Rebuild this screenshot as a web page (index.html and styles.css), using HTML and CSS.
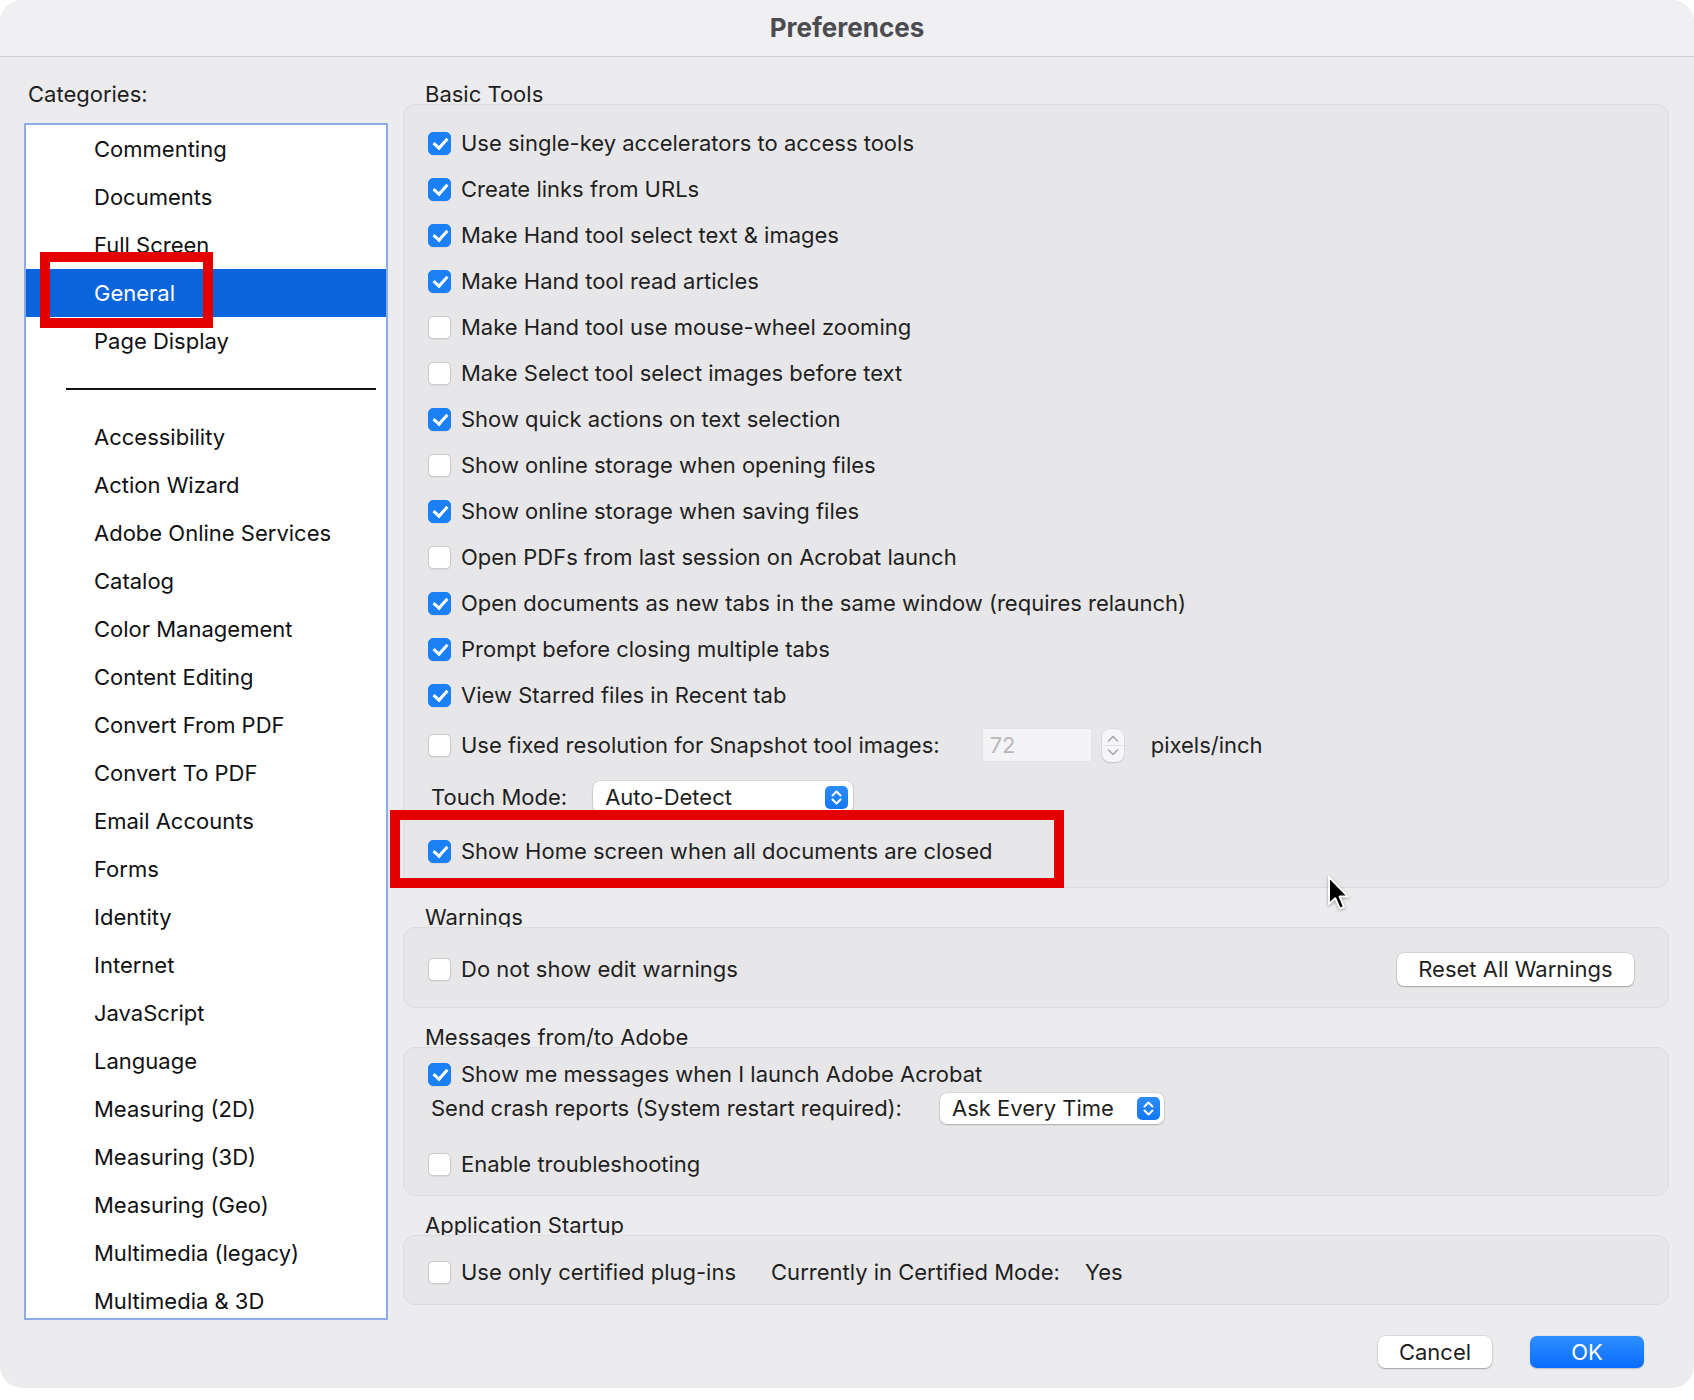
FILE: index.html
```html
<!DOCTYPE html>
<html>
<head>
<meta charset="utf-8">
<title>Preferences</title>
<link rel="stylesheet" href="styles.css">
</head>
<body>
<div class="window">
  <div class="titlebar">Preferences</div>
  <div class="main">
    <div class="left">
      <div class="label cat-label">Categories:</div>
      <div class="catlist">
        <div class="cat">Commenting</div>
        <div class="cat">Documents</div>
        <div class="cat">Full Screen</div>
        <div class="cat sel">General</div>
        <div class="cat">Page Display</div>
        <div class="sep"></div>
        <div class="cat">Accessibility</div>
        <div class="cat">Action Wizard</div>
        <div class="cat">Adobe Online Services</div>
        <div class="cat">Catalog</div>
        <div class="cat">Color Management</div>
        <div class="cat">Content Editing</div>
        <div class="cat">Convert From PDF</div>
        <div class="cat">Convert To PDF</div>
        <div class="cat">Email Accounts</div>
        <div class="cat">Forms</div>
        <div class="cat">Identity</div>
        <div class="cat">Internet</div>
        <div class="cat">JavaScript</div>
        <div class="cat">Language</div>
        <div class="cat">Measuring (2D)</div>
        <div class="cat">Measuring (3D)</div>
        <div class="cat">Measuring (Geo)</div>
        <div class="cat">Multimedia (legacy)</div>
        <div class="cat">Multimedia &amp; 3D</div>
        <div class="annot annot-general"></div>
      </div>
    </div>

    <div class="right">
      <div class="section-label">Basic Tools</div>
      <div class="group g-basic">
        <div class="row"><span class="cb on"></span><span>Use single-key accelerators to access tools</span></div>
        <div class="row"><span class="cb on"></span><span>Create links from URLs</span></div>
        <div class="row"><span class="cb on"></span><span>Make Hand tool select text &amp; images</span></div>
        <div class="row"><span class="cb on"></span><span>Make Hand tool read articles</span></div>
        <div class="row"><span class="cb"></span><span>Make Hand tool use mouse-wheel zooming</span></div>
        <div class="row"><span class="cb"></span><span>Make Select tool select images before text</span></div>
        <div class="row"><span class="cb on"></span><span>Show quick actions on text selection</span></div>
        <div class="row"><span class="cb"></span><span>Show online storage when opening files</span></div>
        <div class="row"><span class="cb on"></span><span>Show online storage when saving files</span></div>
        <div class="row"><span class="cb"></span><span>Open PDFs from last session on Acrobat launch</span></div>
        <div class="row"><span class="cb on"></span><span>Open documents as new tabs in the same window (requires relaunch)</span></div>
        <div class="row"><span class="cb on"></span><span>Prompt before closing multiple tabs</span></div>
        <div class="row"><span class="cb on"></span><span>View Starred files in Recent tab</span></div>
        <div class="row r-fixed">
          <span class="cb"></span><span>Use fixed resolution for Snapshot tool images:</span>
          <span class="numfield">72</span>
          <span class="spin">
            <svg viewBox="0 0 22 33" width="22" height="33"><path d="M6.5 12 L11 7.5 L15.5 12" fill="none" stroke="#a9a9ad" stroke-width="1.6" stroke-linecap="round" stroke-linejoin="round"/><line x1="1" y1="16.5" x2="21" y2="16.5" stroke="#e2e2e4" stroke-width="1"/><path d="M6.5 21 L11 25.5 L15.5 21" fill="none" stroke="#a9a9ad" stroke-width="1.6" stroke-linecap="round" stroke-linejoin="round"/></svg>
          </span>
          <span class="unit">pixels/inch</span>
        </div>
        <div class="row r-touch">
          <span class="plain-label">Touch Mode:</span>
          <span class="select sel-touch"><span>Auto-Detect</span>
            <span class="stepper"><svg viewBox="0 0 23 23" width="23" height="23"><path d="M7.5 9.5 L11.5 5.5 L15.5 9.5" fill="none" stroke="#fff" stroke-width="2" stroke-linecap="round" stroke-linejoin="round"/><path d="M7.5 13.5 L11.5 17.5 L15.5 13.5" fill="none" stroke="#fff" stroke-width="2" stroke-linecap="round" stroke-linejoin="round"/></svg></span>
          </span>
        </div>
        <div class="row r-home"><span class="cb on"></span><span>Show Home screen when all documents are closed</span></div>
        <div class="annot annot-home"></div>
      </div>

      <div class="section-label">Warnings</div>
      <div class="group g-warn">
        <div class="row"><span class="cb"></span><span>Do not show edit warnings</span>
          <span class="btn btn-reset">Reset All Warnings</span></div>
      </div>

      <div class="section-label">Messages from/to Adobe</div>
      <div class="group g-msg">
        <div class="row row-s"><span class="cb on"></span><span>Show me messages when I launch Adobe Acrobat</span></div>
        <div class="row row-s">
          <span class="plain-label crash-label">Send crash reports (System restart required):</span>
          <span class="select sel-crash"><span>Ask Every Time</span>
            <span class="stepper"><svg viewBox="0 0 23 23" width="23" height="23"><path d="M7.5 9.5 L11.5 5.5 L15.5 9.5" fill="none" stroke="#fff" stroke-width="2" stroke-linecap="round" stroke-linejoin="round"/><path d="M7.5 13.5 L11.5 17.5 L15.5 13.5" fill="none" stroke="#fff" stroke-width="2" stroke-linecap="round" stroke-linejoin="round"/></svg></span>
          </span>
        </div>
        <div class="row row-s r-trouble"><span class="cb"></span><span>Enable troubleshooting</span></div>
      </div>

      <div class="section-label">Application Startup</div>
      <div class="group g-app">
        <div class="row"><span class="cb"></span><span>Use only certified plug-ins</span>
          <span class="cert">Currently in Certified Mode:</span><span class="yes">Yes</span></div>
      </div>

      <div class="footer">
        <span class="btn btn-cancel">Cancel</span>
        <span class="btn btn-ok">OK</span>
      </div>
    </div>
  </div>

  <svg class="cursor" width="26" height="38" viewBox="0 0 26 38">
    <path d="M2 2 V29 L8.3 23.2 L12.8 33.6 L17 31.8 L12.6 21.6 H21 Z" fill="#000" stroke="#fff" stroke-width="2" stroke-linejoin="round"/>
  </svg>
</div>
</body>
</html>
```

FILE: styles.css
```css
html, body {
  margin: 0;
  padding: 0;
  background: #ffffff;
}

.window {
  width: 1694px;
  height: 1388px;
  background: #ECECEE;
  border-radius: 22px;
  position: relative;
  overflow: hidden;
  font-family: Inter, "Noto Sans", "Liberation Sans", sans-serif;
  font-size: 22px;
  color: #1f1f21;
}

.titlebar {
  height: 56px;
  box-sizing: content-box;
  border-bottom: 1px solid #D2D2D4;
  background: #F0F0F2;
  display: flex;
  align-items: center;
  justify-content: center;
  font-size: 26px;
  font-weight: 700;
  color: #4b4b50;
  line-height: 52px;
}

.main {
  display: flex;
}

.left {
  padding: 26px 0 0 24px;
  width: 364px;
  flex: none;
}

.label {
  line-height: 22px;
  height: 22px;
}

.cat-label {
  padding-left: 4px;
}

.catlist {
  margin-top: 18px;
  width: 364px;
  height: 1197px;
  box-sizing: border-box;
  border: 2px solid #8DABE4;
  background: #ffffff;
  position: relative;
  overflow: hidden;
}

.cat {
  height: 48px;
  line-height: 48px;
  padding-left: 68px;
  white-space: nowrap;
  color: #111113;
}

.cat.sel {
  background: #0A64DC;
  color: #ffffff;
}

.sep {
  height: 48px;
  display: flex;
  align-items: center;
}

.sep::before {
  content: "";
  margin-left: 40px;
  width: 310px;
  height: 2px;
  background: #111111;
}

.annot {
  position: absolute;
  box-sizing: border-box;
  border: 10px solid #E50000;
  pointer-events: none;
}

.annot-general {
  left: 14px;
  top: 127px;
  width: 173px;
  height: 76px;
}

.right {
  margin-left: 15px;
  width: 1266px;
  flex: none;
  padding-top: 26px;
}

.section-label {
  line-height: 22px;
  height: 22px;
  padding-left: 22px;
  white-space: nowrap;
}

.group {
  background: #E7E7E9;
  border: 1px solid #DCDCDE;
  border-radius: 12px;
  position: relative;
  padding-left: 24px;
  margin-top: -1px;
  margin-bottom: 18px;
}

.g-basic {
  padding-top: 15px;
  padding-bottom: 13px;
}

.g-warn {
  padding-top: 18px;
  padding-bottom: 15px;
}

.g-msg {
  padding-top: 9px;
  padding-bottom: 14px;
}

.g-app {
  padding-top: 13px;
  padding-bottom: 9px;
  margin-bottom: 0;
}

.row {
  display: flex;
  align-items: center;
  height: 46px;
  white-space: nowrap;
}

.row-s {
  height: 34px;
}

.r-fixed { margin-top: 4px; }
.r-touch { margin-top: 6px; }
.r-home { margin-top: 8px; }
.r-trouble { margin-top: 22px; }

.cb {
  width: 23px;
  height: 23px;
  box-sizing: border-box;
  border-radius: 5px;
  background: #ffffff;
  border: 1px solid #CBCBCD;
  box-shadow: 0 0.5px 1px rgba(0, 0, 0, 0.06);
  margin-right: 10px;
  flex: none;
  position: relative;
}

.cb.on {
  background: #1B80F6;
  border-color: #1B80F6;
}

.cb.on::after {
  content: "";
  position: absolute;
  left: 6.5px;
  top: 2.5px;
  width: 6px;
  height: 11px;
  border: solid #ffffff;
  border-width: 0 3px 3px 0;
  transform: rotate(42deg);
}

.numfield {
  margin-left: 42px;
  width: 110px;
  height: 34px;
  box-sizing: border-box;
  background: #F4F4F6;
  border: 1px solid #E3E3E5;
  color: #b8b8bb;
  padding-left: 7px;
  line-height: 32px;
}

.spin {
  margin-left: 10px;
  width: 22px;
  height: 33px;
  border-radius: 8px;
  background: #F6F6F8;
  box-shadow: 0 0 0 0.5px rgba(0, 0, 0, 0.08), 0 1px 1.5px rgba(0, 0, 0, 0.12);
  display: flex;
}

.unit {
  margin-left: 27px;
}

.plain-label {
  padding-left: 3px;
}

.select {
  height: 32px;
  box-sizing: border-box;
  background: #ffffff;
  border-radius: 7px;
  box-shadow: 0 0 0 0.5px rgba(0, 0, 0, 0.12), 0 1px 2px rgba(0, 0, 0, 0.22);
  display: flex;
  align-items: center;
  justify-content: space-between;
  padding: 0 5px 0 12px;
}

.sel-touch {
  margin-left: 26px;
  width: 260px;
}

.sel-crash {
  margin-left: 38px;
  width: 224px;
  height: 31px;
  padding-right: 4px;
}

.stepper {
  width: 23px;
  height: 23px;
  border-radius: 5px;
  background: linear-gradient(#2E8CFA, #1277F2);
  display: flex;
}

.btn {
  display: inline-flex;
  align-items: center;
  justify-content: center;
  height: 33px;
  box-sizing: border-box;
  border-radius: 7px;
  background: #ffffff;
  box-shadow: 0 0 0 0.5px rgba(0, 0, 0, 0.14), 0 1px 1.5px rgba(0, 0, 0, 0.25);
  color: #1f1f21;
}

.btn-reset {
  margin-left: auto;
  margin-right: 34px;
  width: 237px;
}

.cert {
  margin-left: 35px;
}

.yes {
  margin-left: 25px;
}

.footer {
  display: flex;
  justify-content: flex-end;
  padding-top: 31px;
  padding-right: 25px;
  gap: 38px;
}

.btn-cancel {
  width: 114px;
  height: 32px;
}

.btn-ok {
  width: 114px;
  height: 32px;
  background: linear-gradient(#2F8FFF, #0A6CFF);
  color: #ffffff;
  box-shadow: 0 0.5px 1.5px rgba(0, 0, 0, 0.2);
}

.annot-home {
  left: -14px;
  top: 705px;
  width: 674px;
  height: 78px;
}

.cursor {
  position: absolute;
  left: 1327px;
  top: 875px;
  filter: drop-shadow(0 1px 1.5px rgba(0, 0, 0, 0.35));
}
```
